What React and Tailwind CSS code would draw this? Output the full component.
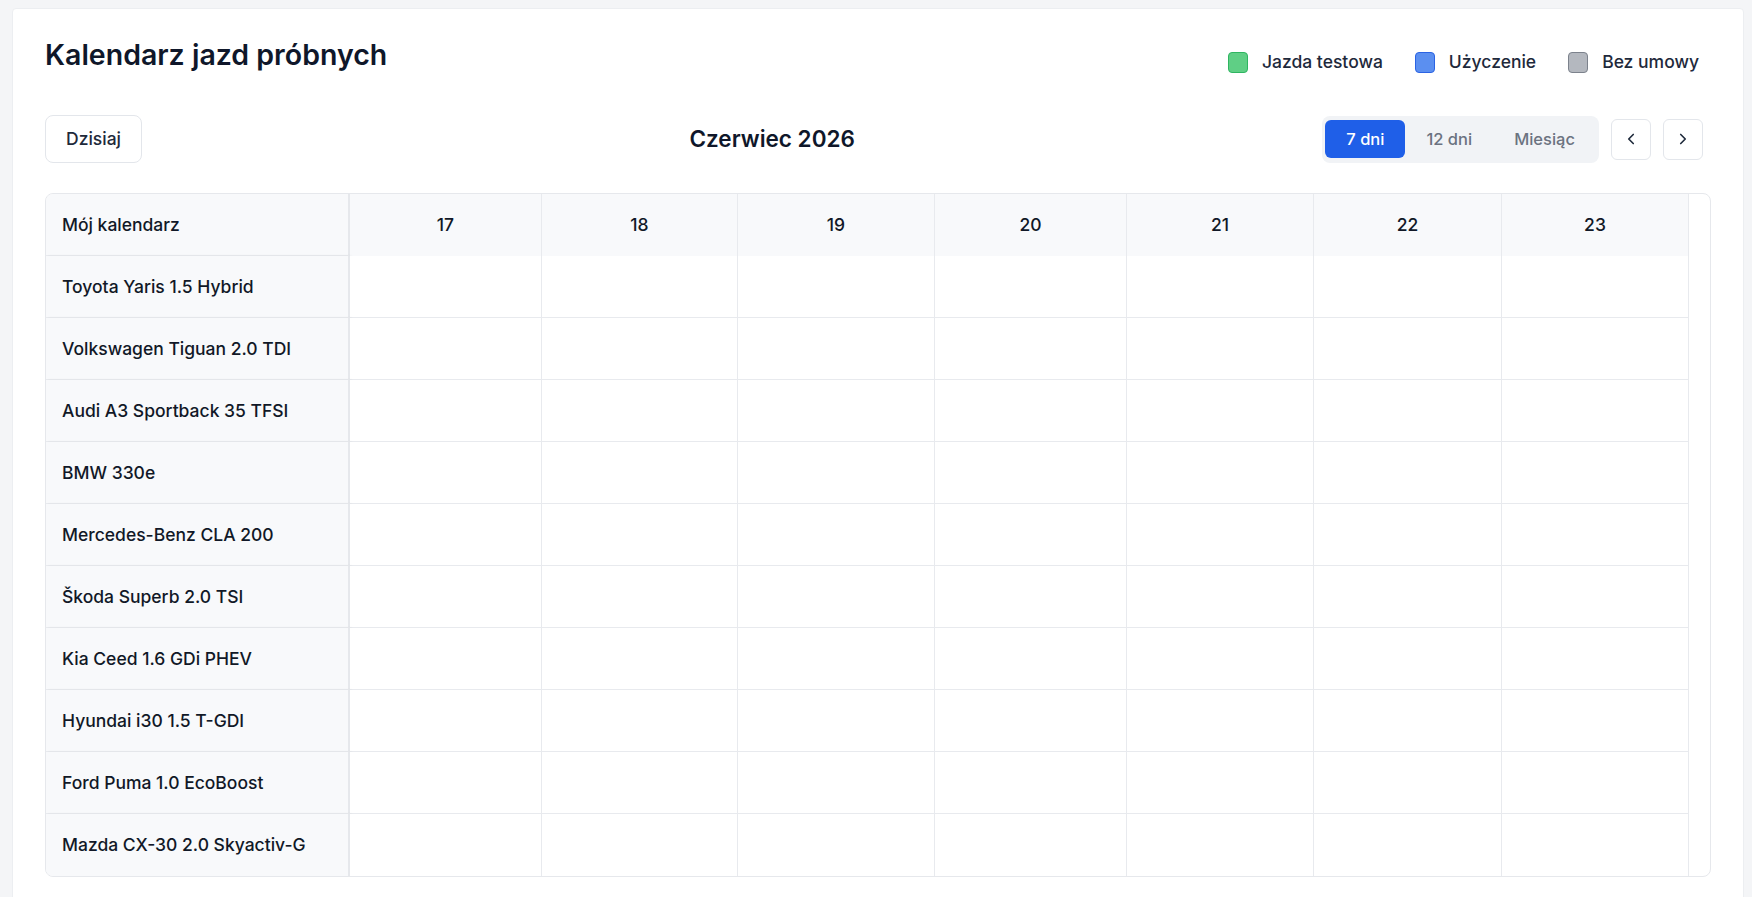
import { ChevronLeft, ChevronRight } from 'lucide-react';

const cars = [
    'Toyota Yaris 1.5 Hybrid',
    'Volkswagen Tiguan 2.0 TDI',
    'Audi A3 Sportback 35 TFSI',
    'BMW 330e',
    'Mercedes-Benz CLA 200',
    'Škoda Superb 2.0 TSI',
    'Kia Ceed 1.6 GDi PHEV',
    'Hyundai i30 1.5 T-GDI',
    'Ford Puma 1.0 EcoBoost',
    'Mazda CX-30 2.0 Skyactiv-G',
];

const days = [17, 18, 19, 20, 21, 22, 23];

const legend = [
    { label: 'Jazda testowa', box: 'bg-[#5fcf85] border-[#2fb561]' },
    { label: 'Użyczenie', box: 'bg-[#5b8ff0] border-[#2b63e3]' },
    { label: 'Bez umowy', box: 'bg-[#b4b8bf] border-[#7c828c]' },
];

export default function App() {
    return (
        <div className="h-screen overflow-hidden bg-[#f4f5f7] pt-2 pl-3 pr-2 font-['Inter',sans-serif]">
            <div className="bg-white border border-[#eceef1] rounded-sm px-8 pt-7 pb-10">
                {/* Header */}
                <div className="flex items-start justify-between">
                    <h1 className="text-[28.5px] leading-9 font-semibold text-[#0f172a]">Kalendarz jazd próbnych</h1>
                    <div className="flex items-center gap-8 mt-[12px] mr-3">
                        {legend.map((item) => (
                            <div key={item.label} className="flex items-center gap-[14px]">
                                <span className={`w-5 h-[21px] rounded-[4px] border-[1.5px] ${item.box}`} />
                                <span className="text-[17.5px] font-medium text-[#1e293b]">{item.label}</span>
                            </div>
                        ))}
                    </div>
                </div>

                {/* Toolbar */}
                <div className="flex items-center justify-between mt-[40px] pr-2">
                    <button className="h-12 px-5 rounded-lg border border-[#e3e6eb] text-[17.5px] font-medium text-[#1e293b]">
                        Dzisiaj
                    </button>
                    <h2 className="ml-[80px] text-[22.5px] font-semibold text-[#0f172a]">Czerwiec 2026</h2>
                    <div className="flex items-center gap-3">
                        <div className="flex items-center p-[3px] rounded-lg bg-[#f1f3f6] h-[47px]">
                            <button className="h-[38px] px-[21px] rounded-md bg-[#1f5fe8] text-white text-[16.5px] font-medium">7 dni</button>
                            <button className="h-[38px] px-[21px] rounded-md text-[#6b7280] text-[16.5px] font-medium">12 dni</button>
                            <button className="h-[38px] px-[21px] rounded-md text-[#6b7280] text-[16.5px] font-medium">Miesiąc</button>
                        </div>
                        <button className="w-10 h-[41px] flex items-center justify-center rounded-md border border-[#e3e6eb] text-[#1e293b]">
                            <ChevronLeft size={18} strokeWidth={2.2} />
                        </button>
                        <button className="w-10 h-[41px] flex items-center justify-center rounded-md border border-[#e3e6eb] text-[#1e293b]">
                            <ChevronRight size={18} strokeWidth={2.2} />
                        </button>
                    </div>
                </div>

                {/* Calendar grid */}
                <div className="mt-[30px] border border-[#e6e8ec] rounded-lg overflow-hidden">
                    <div className="grid grid-cols-[304px_192px_196px_197px_192px_187px_188px_187px_1fr]">
                        <div className="h-[62px] flex items-center pl-4 bg-[#f8f9fb] border-b border-[#e8eaee] border-r-2 border-r-[#e6e8ec] shadow-[2px_0_3px_rgba(15,23,42,0.05)] text-[17.5px] font-medium text-[#111827]">
                            Mój kalendarz
                        </div>
                        {days.map((d) => (
                            <div key={d} className="h-[62px] flex items-center justify-center bg-[#f8f9fb] border-r border-[#e8eaee] text-[17.5px] font-medium text-[#111827]">
                                {d}
                            </div>
                        ))}
                        <div className="h-[62px]" />

                        {cars.map((car, i) => (
                            <div key={car} className="contents">
                                <div className={`h-[62px] flex items-center pl-4 bg-[#f8f9fb] border-r-2 border-r-[#e6e8ec] shadow-[2px_0_3px_rgba(15,23,42,0.05)] text-[17.5px] font-medium text-[#111827] ${i < cars.length - 1 ? 'border-b border-[#e8eaee]' : ''}`}>
                                    {car}
                                </div>
                                {days.map((d) => (
                                    <div key={d} className={`h-[62px] bg-white border-r border-[#e8eaee] ${i < cars.length - 1 ? 'border-b' : ''}`} />
                                ))}
                                <div className="h-[62px]" />
                            </div>
                        ))}
                    </div>
                </div>
            </div>
        </div>
    );
}
